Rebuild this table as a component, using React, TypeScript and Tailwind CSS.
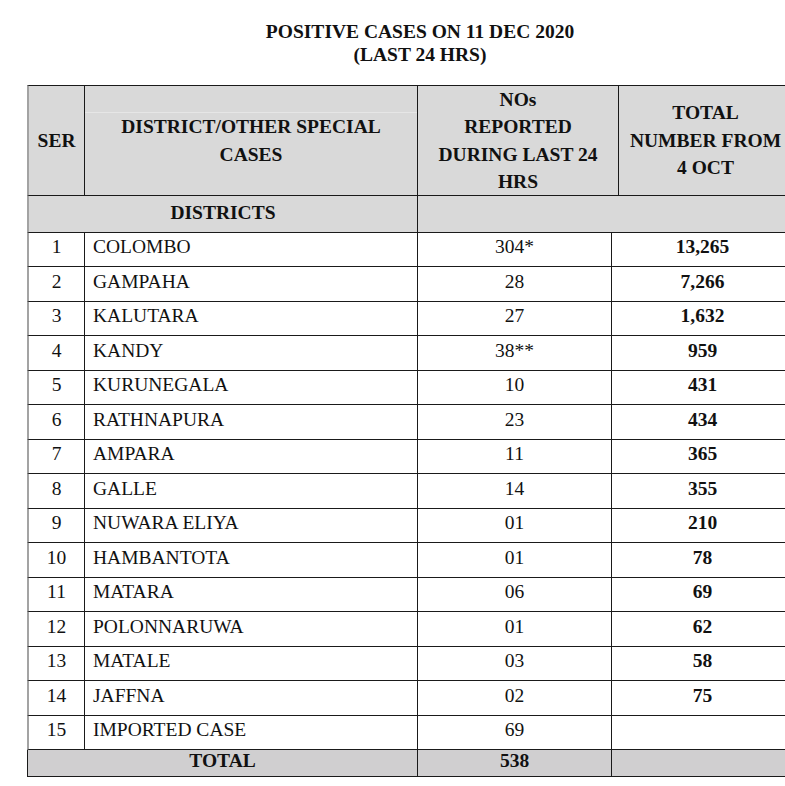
const rows = [
  { ser: 1, name: 'COLOMBO', last: '304*', total: '13,265' },
  { ser: 2, name: 'GAMPAHA', last: '28', total: '7,266' },
  { ser: 3, name: 'KALUTARA', last: '27', total: '1,632' },
  { ser: 4, name: 'KANDY', last: '38**', total: '959' },
  { ser: 5, name: 'KURUNEGALA', last: '10', total: '431' },
  { ser: 6, name: 'RATHNAPURA', last: '23', total: '434' },
  { ser: 7, name: 'AMPARA', last: '11', total: '365' },
  { ser: 8, name: 'GALLE', last: '14', total: '355' },
  { ser: 9, name: 'NUWARA ELIYA', last: '01', total: '210' },
  { ser: 10, name: 'HAMBANTOTA', last: '01', total: '78' },
  { ser: 11, name: 'MATARA', last: '06', total: '69' },
  { ser: 12, name: 'POLONNARUWA', last: '01', total: '62' },
  { ser: 13, name: 'MATALE', last: '03', total: '58' },
  { ser: 14, name: 'JAFFNA', last: '02', total: '75' },
  { ser: 15, name: 'IMPORTED CASE', last: '69', total: '' },
];

export default function App() {
  return (
    <div className="w-[785px] h-[786px] overflow-hidden bg-white font-['Liberation_Serif','Times_New_Roman',serif] text-[19.5px] text-[#111]">
      <div className="w-[840px] pt-[20px] text-center font-bold leading-[23px]">
        <div>POSITIVE CASES ON 11 DEC 2020</div>
        <div>(LAST 24 HRS)</div>
      </div>

      <div className="ml-[27px] mt-[19px] w-[780px]">
        {/* header */}
        <div className="flex h-[111px] border-t border-b border-[#1a1a1a] border-l-2 border-l-[#a3a3a3] bg-[#d9d9d9] font-bold leading-[27.5px] text-center">
          <div className="w-[56px] flex items-center justify-center border-r border-[#1a1a1a]">SER</div>
          <div className="w-[333px] flex items-center justify-center border-r border-[#1a1a1a] bg-[linear-gradient(to_bottom,#d9d9d9_26px,#e6e6e6_26px,#e6e6e6_27px,#d9d9d9_27px)]">
            <div>
              DISTRICT/OTHER SPECIAL
              <br />
              CASES
            </div>
          </div>
          <div className="w-[201px] flex items-center justify-center border-r border-[#1a1a1a]">
            <div>
              NOs
              <br />
              REPORTED
              <br />
              DURING LAST 24
              <br />
              HRS
            </div>
          </div>
          <div className="flex-1 flex items-center justify-center pr-[15px]">
            <div>
              TOTAL
              <br />
              NUMBER FROM
              <br />
              4 OCT
            </div>
          </div>
        </div>

        {/* districts band */}
        <div className="flex h-[37px] border-b border-[#1a1a1a] border-l-2 border-l-[#a3a3a3] bg-[#d9d9d9] font-bold">
          <div className="w-[389px] flex items-center justify-center pb-[3px] border-r border-[#1a1a1a]">DISTRICTS</div>
          <div className="flex-1" />
        </div>

        {/* body */}
        {rows.map((r) => (
          <div
            key={r.ser}
            className="flex h-[34.47px] border-b border-[#1a1a1a] border-l-2 border-l-[#a3a3a3] leading-none"
          >
            <div className="w-[56px] flex items-center justify-center pb-[5px] border-r border-[#1a1a1a]">{r.ser}</div>
            <div className="w-[333px] flex items-center pl-[8px] pb-[5px] border-r border-[#1a1a1a]">{r.name}</div>
            <div className="w-[194px] flex items-center justify-center pb-[5px] border-r border-[#1a1a1a]">{r.last}</div>
            <div className="flex-1 flex items-center justify-center pb-[5px] pr-[14px] font-bold">{r.total}</div>
          </div>
        ))}

        {/* total */}
        <div className="flex h-[27px] border-b border-[#1a1a1a] border-l border-l-[#1a1a1a] bg-[#d0cfd0] font-bold leading-none">
          <div className="w-[390px] flex items-center justify-center pb-[4px] border-r border-[#1a1a1a]">TOTAL</div>
          <div className="w-[194px] flex items-center justify-center pb-[4px] border-r border-[#1a1a1a]">538</div>
          <div className="flex-1" />
        </div>
      </div>
    </div>
  );
}
